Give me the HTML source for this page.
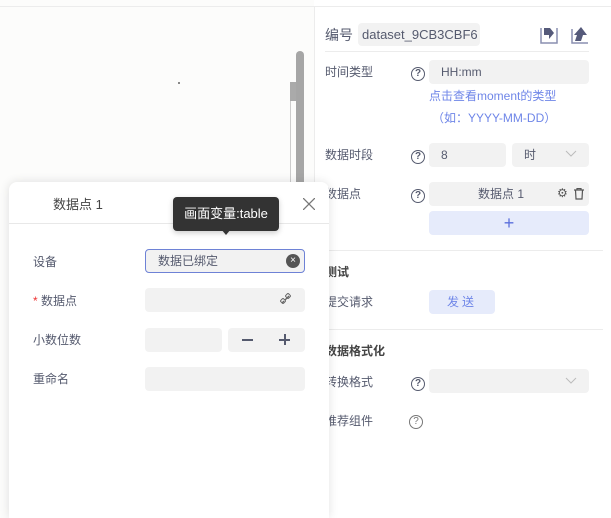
<!DOCTYPE html>
<html style="width:611px;height:518px;overflow:hidden"><head><meta charset="utf-8"><style>
*{box-sizing:border-box;margin:0;padding:0}
body{width:611px;height:518px;overflow:hidden;background:#fff;font-family:"Liberation Sans","Noto Sans CJK SC",sans-serif;font-size:12px;color:#555a6e;position:relative}
.a{position:absolute}
.inp{position:absolute;background:#f2f2f2;border-radius:4px}
.q{position:absolute;width:14px;height:14px;border:1.3px solid #555a6e;border-radius:50%;font-size:10px;line-height:11px;text-align:center;color:#555a6e;font-weight:bold}
.lbl{position:absolute;font-size:12px;color:#555a6e}
.hd{position:absolute;font-size:12px;font-weight:bold;color:#444}
</style></head><body>
<div class="a" style="left:0;top:0;width:314px;height:518px;background:#fcfcfb"></div>
<div class="a" style="left:0;top:6px;width:611px;height:1px;background:#ececec"></div>
<div class="a" style="left:314px;top:7px;width:1px;height:511px;background:#ececec"></div>
<div class="a" style="left:178px;top:82px;width:2px;height:2px;background:#888"></div>
<div class="a" style="left:290px;top:82px;width:6px;height:19px;background:#aaa"></div>
<div class="a" style="left:290px;top:101px;width:1px;height:90px;background:#ccc"></div>
<div class="a" style="left:296px;top:51px;width:8px;height:140px;background:#a6a6a6;border-radius:4px"></div>

<div class="a" style="left:325px;top:25px;font-size:14px;color:#555a6e">编号</div>
<div class="inp" style="left:358px;top:23px;width:122px;height:23px;font-size:13px;line-height:23px;padding-left:4px;color:#555a6e">dataset_9CB3CBF6</div>
<svg class="a" style="left:539px;top:25px" width="20" height="20" viewBox="0 0 20 20"><path d="M2 3v15h16V3" fill="none" stroke="#8a8fb0" stroke-width="1.5"/><path d="M5 3h6l4 5-5 6V10H5z" fill="#555a7a"/></svg>
<svg class="a" style="left:569px;top:25px" width="20" height="20" viewBox="0 0 20 20"><path d="M3 4v14h16" fill="none" stroke="#8a8fb0" stroke-width="1.5"/><path d="M6 16l2-6H5l7-8 6 8h-4l-2 6z" fill="#555a7a"/></svg>
<div class="a" style="left:325px;top:51px;width:264px;height:1px;background:#ececec"></div>

<div class="lbl" style="left:325px;top:63px">时间类型</div>
<div class="q" style="left:411px;top:67px">?</div>
<div class="inp" style="left:429px;top:60px;width:160px;height:24px;line-height:24px;padding-left:12px;color:#555a6e">HH:mm</div>
<div class="a" style="left:429px;top:87px;color:#6f86e8">点击查看moment的类型</div>
<div class="a" style="left:432px;top:109px;color:#6f86e8">（如：YYYY-MM-DD）</div>

<div class="lbl" style="left:325px;top:146px">数据时段</div>
<div class="q" style="left:411px;top:150px">?</div>
<div class="inp" style="left:429px;top:143px;width:77px;height:24px;line-height:24px;padding-left:12px">8</div>
<div class="inp" style="left:512px;top:143px;width:77px;height:24px;line-height:24px;padding-left:12px">时</div>
<svg class="a" style="left:565px;top:150px" width="12" height="8"><path d="M1 1l5 5 5-5" fill="none" stroke="#bbb"/></svg>

<div class="lbl" style="left:325px;top:185px">数据点</div>
<div class="q" style="left:411px;top:189px">?</div>
<div class="inp" style="left:429px;top:182px;width:160px;height:24px;line-height:24px;text-align:center;padding-right:16px">数据点 1</div>
<div class="a" style="left:557px;top:186px;font-size:12px;color:#555">⚙</div>
<svg class="a" style="left:574px;top:188px" width="10" height="12"><path d="M0 2h10M3 2V0.5h4V2M1.5 2l0.5 9h6l0.5-9" fill="none" stroke="#555" stroke-width="1.2"/></svg>
<div class="a" style="left:429px;top:211px;width:160px;height:24px;background:#e6ebfb;border-radius:4px;text-align:center;line-height:24px;font-size:18px;color:#5b6fdc">+</div>

<div class="a" style="left:315px;top:250px;width:288px;height:1px;background:#ececec"></div>
<div class="hd" style="left:325px;top:263px">测试</div>
<div class="lbl" style="left:325px;top:293px">提交请求</div>
<div class="a" style="left:429px;top:290px;width:66px;height:24px;background:#e6ebfb;border-radius:4px;text-align:center;line-height:24px;color:#6f86e8;letter-spacing:3px">发送</div>
<div class="a" style="left:315px;top:329px;width:288px;height:1px;background:#ececec"></div>
<div class="hd" style="left:325px;top:342px">数据格式化</div>
<div class="lbl" style="left:325px;top:373px">转换格式</div>
<div class="q" style="left:411px;top:377px">?</div>
<div class="inp" style="left:429px;top:369px;width:160px;height:24px"></div>
<svg class="a" style="left:565px;top:377px" width="12" height="8"><path d="M1 1l5 5 5-5" fill="none" stroke="#bbb"/></svg>
<div class="lbl" style="left:325px;top:412px">推荐组件</div>
<div class="q" style="left:409px;top:415px;border-color:#777;color:#777;font-weight:normal">?</div>

<div class="a" style="left:9px;top:182px;width:320px;height:336px;background:#fff;border-radius:8px 8px 0 0;box-shadow:0 0 10px rgba(0,0,0,0.12)">
<div class="a" style="left:44px;top:12px;font-size:13px;color:#444">数据点 1</div>
<svg class="a" style="left:294px;top:16px" width="12" height="12"><path d="M0 0l12 12M12 0L0 12" stroke="#777" stroke-width="1.3"/></svg>
<div class="a" style="left:0;top:41px;width:320px;height:1px;background:#e8e8e8"></div>
<div class="lbl" style="left:24px;top:71px">设备</div>
<div class="a" style="left:136px;top:67px;width:160px;height:24px;border:1px solid #6e82d6;border-radius:4px;background:#f2f2f2;line-height:22px;padding-left:12px;color:#555a6e">数据已绑定</div>
<div class="a" style="left:277px;top:72px;width:14px;height:14px;border-radius:50%;background:#555;color:#fff;font-size:10px;line-height:14px;text-align:center">×</div>
<div class="lbl" style="left:24px;top:110px"><span style="color:#e33">*</span> 数据点</div>
<div class="inp" style="left:136px;top:106px;width:160px;height:24px"></div>
<svg class="a" style="left:271px;top:111px" width="12" height="12"><path d="M2 10l2-2M7 5l2-2M5 7l2-2" stroke="#666" stroke-width="1.3" fill="none"/><rect x="1" y="6" width="4" height="4" rx="1" fill="none" stroke="#666" transform="rotate(-45 3 8)"/><rect x="6" y="1" width="4" height="4" rx="1" fill="none" stroke="#666" transform="rotate(-45 8 3)"/></svg>
<div class="lbl" style="left:24px;top:149px">小数位数</div>
<div class="inp" style="left:136px;top:146px;width:77px;height:24px"></div>
<div class="inp" style="left:219px;top:146px;width:77px;height:24px"></div>
<div class="a" style="left:233px;top:157px;width:11px;height:2px;background:#555a6e"></div>
<div class="a" style="left:270px;top:157px;width:11px;height:2px;background:#555a6e"></div>
<div class="a" style="left:274.5px;top:152px;width:2px;height:11px;background:#555a6e"></div>
<div class="lbl" style="left:24px;top:188px">重命名</div>
<div class="inp" style="left:136px;top:185px;width:160px;height:24px"></div>
</div>

<div class="a" style="left:173px;top:197px;width:106px;height:34px;background:#333;border-radius:4px;color:#fff;font-size:13px;line-height:34px;text-align:center;box-shadow:0 2px 6px rgba(0,0,0,0.2)">画面变量:table</div>
<div class="a" style="left:221px;top:229px;width:0;height:0;border-left:5px solid transparent;border-right:5px solid transparent;border-top:6px solid #333"></div>
</body></html>
